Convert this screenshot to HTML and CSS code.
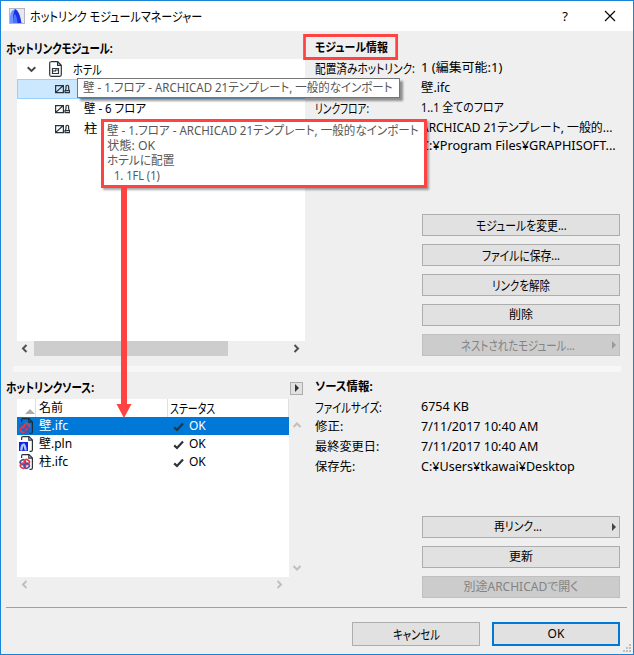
FILE: index.html
```html
<!DOCTYPE html>
<html lang="ja">
<head>
    <meta charset="UTF-8">
    <title>ホットリンク モジュールマネージャー</title>
    <link rel="stylesheet" href="styles.css">
</head>
<body>
    <svg class="defs" width="0" height="0">
        <defs>
            <g id="module" fill="none" stroke="#2b343b" stroke-width="1.2">
                <path d="M.6 1.6h7.8v7H.6zM.8 8.4L8 1.8"/>
                <path d="M9.6 8.6h5v-2h-4.6v2M10.2 6.6l.8-2V2.2q1.3-1.9 2.6 0v2.4l.7 2"/>
            </g>
            <g id="page">
                <path d="M3 .7h7l3.3 3.3v11.3H3z" fill="#fff" stroke="none"/>
                <path d="M2.6 4V2q0-1.3 1.3-1.3H10l3.4 3.4v9.8q0 1.4-1.4 1.4h-1.5M9.8.8v3.4h3.6" fill="none" stroke="#2b343b" stroke-width="1.2"/>
            </g>
            <g id="ifc-rings" fill="none" stroke-width="1.7">
                <rect x="1.3" y="6" width="5" height="4.4" rx="1.8" transform="rotate(-40 3.8 8.2)" stroke="#3a55a5"/>
                <rect x="5.3" y="5.8" width="5" height="4.4" rx="1.8" transform="rotate(40 7.8 8)" stroke="#e83a4b"/>
                <rect x="1.4" y="9.6" width="5" height="4.4" rx="1.8" transform="rotate(40 3.9 11.8)" stroke="#e83a4b"/>
                <rect x="5.2" y="9.6" width="5" height="4.4" rx="1.8" transform="rotate(-40 7.7 11.8)" stroke="#5a4c9c"/>
            </g>
            <g id="ifc">
                <use href="#page"/>
                <use href="#ifc-rings"/>
            </g>
            <g id="ifc-current">
                <path d="M2.6 4V2q0-1.3 1.3-1.3H10l3.4 3.4v9.8q0 1.4-1.4 1.4h-1.5M9.8.8v3.4h3.6" fill="none" stroke="#17303f" stroke-width="1.2"/>
                <use href="#ifc-rings"/>
            </g>
            <path id="check" d="M1.2 6.4L4 9 10 2.4" fill="none" stroke="#2b343b" stroke-width="2.2"/>
            <path id="chev" d="M5.5 1L2 4.5 5.5 8" fill="none" stroke="currentColor" stroke-width="2"/>
        </defs>
    </svg>

    <div class="window">
        <div class="titlebar">
            <svg class="logo" width="16" height="16" viewBox="0 0 16 16">
                <rect x=".5" y=".5" width="15" height="15" fill="#e6e8ee" stroke="#b4b7c0"/>
                <path d="M1 15V8Q2 1 7 1L5 7 4 15z" fill="#6f96ff"/>
                <path d="M4 15Q3.5 4 6.5 1Q10.5 3 12.5 15z" fill="#1a32e6"/>
                <path d="M4 15Q4 8 6 5.5 8 9 8.5 15z" fill="#4d73fb"/>
            </svg>
            <span class="title kana" data-w="172">ホットリンク モジュールマネージャー</span>
            <span class="help">?</span>
            <svg class="close" width="12" height="12" viewBox="0 0 12 12"><path d="M1 1l10 10M11 1L1 11" stroke="#000" stroke-width="1.1"/></svg>
        </div>

        <div class="panel modules">
            <div class="left">
                <div class="heading"><b class="kana" data-w="107">ホットリンクモジュール:</b></div>
                <div class="tree">
                    <div class="node root">
                        <svg class="expand" width="9" height="7" viewBox="0 0 9 7"><path d="M.7 1.3L4.5 5 8.3 1.3" fill="none" stroke="#444" stroke-width="1.9"/></svg>
                        <svg width="13" height="16" viewBox="0 0 13 16"><path d="M2 .7h6.7l3.6 3.5v9.6q0 1.5-1.5 1.5H2.2Q.7 15.3.7 13.8V2.2Q.7.7 2.2.7M8.6.8v3.5h3.6M3.5 7.5h6v5h-6zM3.5 10h3V9h3" fill="none" stroke="#2b343b" stroke-width="1.2"/></svg>
                        <span class="kana" data-w="29">ホテル</span>
                    </div>
                    <div class="node selected">
                        <svg width="15" height="10"><use href="#module"/></svg>
                    </div>
                    <div class="node">
                        <svg width="15" height="10"><use href="#module"/></svg>
                        <span data-w="62">壁 - 6 フロア</span>
                    </div>
                    <div class="node">
                        <svg width="15" height="10"><use href="#module"/></svg>
                        <span data-w="21">柱 -</span>
                    </div>
                </div>
                <div class="hscroll">
                    <svg width="8" height="9"><use href="#chev"/></svg>
                    <div class="thumb"></div>
                    <svg class="flip" width="8" height="9"><use href="#chev"/></svg>
                </div>
                <div class="tip-name"><span data-w="310">壁 - 1.フロア - ARCHICAD 21テンプレート, 一般的なインポート</span></div>
            </div>
            <div class="right">
                <div class="heading"><b class="marked" data-w="73">モジュール情報</b></div>
                <div class="info">
                    <div><span class="kana" data-w="100">配置済みホットリンク:</span></div><div><span data-w="81">1 (編集可能:1)</span></div>
                    <div></div><div><span data-w="29">壁.ifc</span></div>
                    <div><span class="kana" data-w="54">リンクフロア:</span></div><div><span data-w="83">1..1 全てのフロア</span></div>
                    <div></div><div><span data-w="191">ARCHICAD 21テンプレート, 一般的...</span></div>
                    <div></div><div><span data-w="195">C:¥Program Files¥GRAPHISOFT...</span></div>
                </div>
                <div class="buttons">
                    <button><span class="kana" data-w="91">モジュールを変更...</span></button>
                    <button><span class="kana" data-w="78">ファイルに保存...</span></button>
                    <button><span class="kana" data-w="58">リンクを解除</span></button>
                    <button><span data-w="24">削除</span></button>
                    <button class="off menu"><span class="kana" data-w="114">ネストされたモジュール...</span></button>
                </div>
            </div>
        </div>

        <div class="splitter"></div>

        <div class="panel sources">
            <div class="left">
                <div class="heading"><b class="kana" data-w="88">ホットリンクソース:</b><i class="popup"></i></div>
                <div class="source-box">
                    <div class="table">
                        <div class="row thead">
                            <div class="icon sort"></div>
                            <div class="name"><span data-w="24">名前</span></div>
                            <div class="status"><span class="kana" data-w="45">ステータス</span></div>
                        </div>
                        <div class="row current">
                            <div class="icon"><svg width="16" height="16"><use href="#ifc-current"/></svg></div>
                            <div class="name"><span data-w="29">壁.ifc</span></div>
                            <div class="status"><svg width="11" height="11"><use href="#check"/></svg><span data-w="17">OK</span></div>
                        </div>
                        <div class="row">
                            <div class="icon"><svg width="16" height="16">
                                <use href="#page"/>
                                <rect x="0" y="6" width="9" height="9" fill="#1720dc"/>
                                <path d="M1.2 14.5Q1.4 8 4 7.4L5.4 7.4Q7.2 9 7.8 14.5H5.8L4.2 9.6 3.4 14.5z" fill="#a9c7ff"/>
                            </svg></div>
                            <div class="name"><span data-w="33">壁.pln</span></div>
                            <div class="status"><svg width="11" height="11"><use href="#check"/></svg><span data-w="17">OK</span></div>
                        </div>
                        <div class="row">
                            <div class="icon"><svg width="16" height="16"><use href="#ifc"/></svg></div>
                            <div class="name"><span data-w="29">柱.ifc</span></div>
                            <div class="status"><svg width="11" height="11"><use href="#check"/></svg><span data-w="17">OK</span></div>
                        </div>
                    </div>
                    <div class="vscroll">
                        <svg class="up" width="8" height="9"><use href="#chev"/></svg>
                        <svg class="down" width="8" height="9"><use href="#chev"/></svg>
                    </div>
                </div>
                <div class="hscroll idle">
                    <svg width="8" height="9"><use href="#chev"/></svg>
                    <svg class="flip" width="8" height="9"><use href="#chev"/></svg>
                </div>
            </div>
            <div class="right">
                <div class="heading"><b data-w="58">ソース情報:</b></div>
                <div class="info">
                    <div><span class="kana" data-w="67">ファイルサイズ:</span></div><div><span data-w="48">6754 KB</span></div>
                    <div><span data-w="28">修正:</span></div><div><span data-w="117">7/11/2017 10:40 AM</span></div>
                    <div><span data-w="64">最終変更日:</span></div><div><span data-w="117">7/11/2017 10:40 AM</span></div>
                    <div><span data-w="40">保存先:</span></div><div><span data-w="154">C:¥Users¥tkawai¥Desktop</span></div>
                </div>
                <div class="buttons">
                    <button class="menu"><span data-w="48">再リンク...</span></button>
                    <button><span data-w="24">更新</span></button>
                    <button class="off"><span data-w="115">別途ARCHICADで開く</span></button>
                </div>
            </div>
        </div>

        <div class="footer">
            <button><span class="kana" data-w="47">キャンセル</span></button>
            <button class="default"><span data-w="17">OK</span></button>
            <svg class="grip" width="8" height="8" viewBox="0 0 8 8"><path d="M6 0h2v2H6zM3 3h2v2H3zM6 3h2v2H6zM0 6h2v2H0zM3 6h2v2H3zM6 6h2v2H6z" fill="#bfbfbf"/></svg>
        </div>

        <div class="tip-detail">
            <div><span data-w="312">壁 - 1.フロア - ARCHICAD 21テンプレート, 一般的なインポート</span></div>
            <div><span data-w="48">状態: OK</span></div>
            <div><span data-w="67">ホテルに配置</span></div>
            <div class="indent"><span data-w="46">1. 1FL (1)</span></div>
        </div>
        <svg class="arrow" width="16" height="232" viewBox="0 0 16 232"><path d="M5 0h6v218h4.5L8 232 .5 218H5z" fill="#ff4343"/></svg>
    </div>

    <script>
        document.querySelectorAll('[data-w]').forEach(el => {
            const natural = el.offsetWidth;
            const w = Number(el.dataset.w);
            el.style.transform = `scaleX(${w / natural})`;
            el.style.marginRight = (w - natural) + 'px';
        });
    </script>
</body>
</html>
```
FILE: styles.css
```css
* {
    box-sizing: border-box;
}
body {
    margin: 0;
    font: 12px/20px "Noto Sans", "Noto Sans CJK JP", sans-serif;
    font-feature-settings: "palt";
    color: #000;
}
svg {
    display: block;
    flex: none;
}
.defs {
    position: absolute;
}
[data-w] {
    display: inline-block;
    flex: none;
    white-space: nowrap;
    transform-origin: 0 50%;
}
.kana {
    font-size: 13px;
}
.window {
    position: relative;
    width: 634px;
    height: 655px;
    border: 1px solid #1883d7;
    background: #efefef;
    overflow: hidden;
}
.titlebar {
    display: flex;
    align-items: center;
    height: 30px;
    padding: 0 17px 1px 8px;
    background: #fff;
}
.title {
    margin-left: 5px;
}
.help {
    margin-left: auto;
    margin-right: 36px;
    font-size: 13px;
}
.panel {
    display: grid;
    grid-template-columns: 299px 1fr;
    column-gap: 10px;
    padding: 0 12px 0 5px;
}
.modules {
    height: 335px;
    padding-top: 6px;
}
.sources {
    height: 235px;
    padding-top: 4px;
}
.heading {
    display: flex;
    align-items: center;
    height: 20px;
    padding-top: 1px;
}
.modules .heading {
    margin-bottom: 2px;
}
.sources .heading {
    margin-bottom: 3px;
}
.left {
    position: relative;
}
.tree {
    height: 282px;
    margin-left: 11px;
    background: #fff;
}
.node {
    display: flex;
    align-items: center;
    height: 20px;
    padding-left: 38px;
    gap: 14px;
}
.root {
    padding-left: 10px;
    gap: 11px;
}
.root .expand {
    margin-right: 2px;
}
.selected {
    background: #cce8ff;
    border: 1px solid #99d1ff;
    padding-left: 37px;
}
.hscroll {
    display: flex;
    align-items: center;
    height: 15px;
    margin-left: 11px;
    padding: 0 5px 0 4px;
    color: #505050;
}
.thumb {
    width: 194px;
    height: 15px;
    margin-left: 5px;
    background: #cdcdcd;
}
.flip {
    margin-left: auto;
    transform: scaleX(-1);
}
.idle {
    padding-right: 22px;
    color: #bfbfbf;
}
.splitter {
    height: 6px;
    margin: 0 12px;
    background: #f7f7f7;
}
.info {
    display: grid;
    grid-template-columns: 106px 1fr;
    grid-auto-rows: 20px;
    margin-top: -1px;
}
.modules .info {
    grid-template-rows: 20px 20px 20px 18px 19px;
}
.sources .info {
    margin-top: -2px;
}
.buttons {
    display: grid;
    gap: 8px;
    width: 198px;
    margin: 59px 0 0 107px;
}
.sources .buttons {
    margin-top: 39px;
}
button {
    position: relative;
    display: flex;
    align-items: center;
    justify-content: center;
    height: 22px;
    padding: 0;
    border: 1px solid #adadad;
    background: #e1e1e1;
    color: #000;
    font: inherit;
    font-feature-settings: inherit;
}
.off {
    background: #ccc;
    border-color: #bfbfbf;
    color: #838383;
}
.menu {
    padding-right: 6px;
}
.menu::after {
    content: "";
    position: absolute;
    right: 3px;
    top: 6px;
    border-left: 4px solid #444;
    border-top: 4px solid transparent;
    border-bottom: 4px solid transparent;
}
.off.menu::after {
    border-left-color: #999;
}
.popup {
    display: flex;
    align-items: center;
    justify-content: center;
    width: 13px;
    height: 13px;
    margin: 3px 2px 0 auto;
    border: 1px solid #adadad;
    background: #e1e1e1;
}
.popup::before {
    content: "";
    border-left: 4px solid #333;
    border-top: 4px solid transparent;
    border-bottom: 4px solid transparent;
}
.source-box {
    display: flex;
    height: 178px;
    margin-left: 11px;
}
.table {
    width: 272px;
    background: #fff;
    line-height: 18px;
}
.row {
    display: grid;
    grid-template-columns: 19px 132px 1fr;
    height: 18px;
}
.row > div {
    display: flex;
    align-items: center;
}
.icon {
    padding-left: 2px;
}
.name {
    padding-left: 3px;
}
.status {
    padding-left: 5px;
    gap: 5px;
}
.thead .status {
    padding-left: 2px;
}
.thead > div {
    border-right: 1px solid #e0e0e0;
}
.sort {
    padding: 6px 0 0 8px;
}
.sort::before {
    content: "";
    border-bottom: 5px solid #aaa;
    border-left: 5px solid transparent;
    border-right: 5px solid transparent;
}
.current {
    background: #0078d7;
    color: #fff;
}
.vscroll {
    display: flex;
    flex-direction: column;
    justify-content: space-between;
    padding: 22px 0 5px 4px;
    color: #bfbfbf;
}
.up {
    transform: rotate(90deg);
}
.down {
    transform: rotate(-90deg);
}
.footer {
    position: relative;
    display: flex;
    justify-content: flex-end;
    gap: 12px;
    margin: 0 6px 0 5px;
    padding: 14px 7px 0 0;
    border-top: 1px solid #a0a0a0;
}
.footer button {
    width: 128px;
    height: 24px;
}
.footer .default {
    border: 2px solid #0078d7;
}
.grip {
    position: absolute;
    right: -4px;
    top: 36px;
}
/* callouts over the dialog */
.marked {
    position: relative;
}
.marked::before {
    content: "";
    position: absolute;
    inset: -4px -11px -2px -13px;
    border: 3px solid #ff4343;
}
.tip-name {
    position: absolute;
    left: 71px;
    top: 41px;
    width: 323px;
    height: 20px;
    padding-left: 5px;
    border: 1px solid #767676;
    background: #fff;
    color: #575757;
    line-height: 18px;
    box-shadow: 3px 3px 2px rgba(0, 0, 0, .4);
    z-index: 1;
}
.tip-detail {
    position: absolute;
    left: 100px;
    top: 118px;
    width: 326px;
    height: 69px;
    padding: 1px 0 0 3px;
    border: 3px solid #ff4343;
    background: #fff;
    color: #575757;
    line-height: 15px;
    box-shadow: 2px 2px 2px rgba(0, 0, 0, .35);
}
.tip-detail div {
    height: 15px;
}
.tip-detail .indent {
    padding-left: 7px;
}
.arrow {
    position: absolute;
    left: 115px;
    top: 185px;
}
```
